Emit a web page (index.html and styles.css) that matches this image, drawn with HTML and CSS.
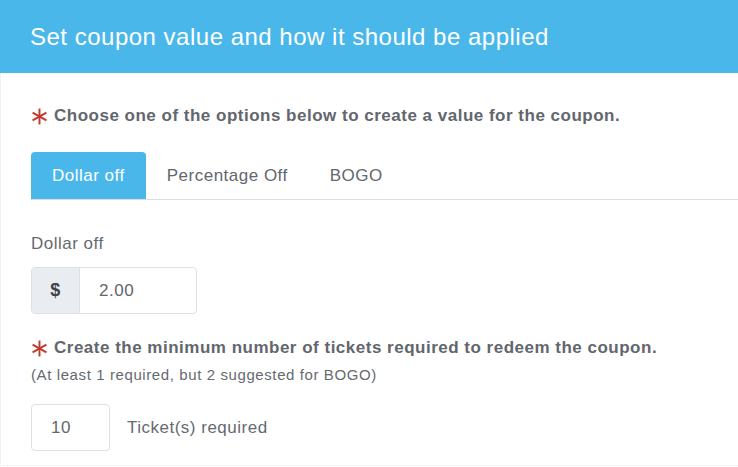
FILE: index.html
```html
<!DOCTYPE html>
<html lang="en">
<head>
<meta charset="utf-8">
<title>Set coupon value</title>
<link rel="stylesheet" href="styles.css">
</head>
<body>
<div class="panel">
  <div class="panel-header">Set coupon value and how it should be applied</div>
  <div class="panel-body">
    <div class="req-heading">
      <svg class="req-star" viewBox="0 0 16 16" aria-hidden="true">
        <g stroke="#c0392b" stroke-width="1.8" stroke-linecap="butt">
          <line x1="8" y1="0.5" x2="8" y2="15.5"/>
          <line x1="1.5" y1="4.3" x2="14.5" y2="11.7"/>
          <line x1="14.5" y1="4.3" x2="1.5" y2="11.7"/>
        </g>
      </svg>
      <span>Choose one of the options below to create a value for the coupon.</span>
    </div>
    <ul class="tabs">
      <li class="tab active">Dollar off</li>
      <li class="tab">Percentage Off</li>
      <li class="tab">BOGO</li>
    </ul>
    <div class="field-label">Dollar off</div>
    <div class="input-group">
      <span class="addon">$</span>
      <span class="input-value">2.00</span>
    </div>
    <div class="req-heading second">
      <svg class="req-star" viewBox="0 0 16 16" aria-hidden="true">
        <g stroke="#c0392b" stroke-width="1.8" stroke-linecap="butt">
          <line x1="8" y1="0.5" x2="8" y2="15.5"/>
          <line x1="1.5" y1="4.3" x2="14.5" y2="11.7"/>
          <line x1="14.5" y1="4.3" x2="1.5" y2="11.7"/>
        </g>
      </svg>
      <span>Create the minimum number of tickets required to redeem the coupon.</span>
    </div>
    <div class="hint">(At least 1 required, but 2 suggested for BOGO)</div>
    <div class="ticket-row">
      <span class="ticket-input">10</span>
      <span class="ticket-label">Ticket(s) required</span>
    </div>
    <div class="divider"></div>
  </div>
</div>
</body>
</html>
```
FILE: styles.css
```css
html, body {
  margin: 0;
  padding: 0;
  background: #ffffff;
}
body {
  font-family: "Liberation Sans", Arial, sans-serif;
  color: #666a70;
  letter-spacing: 0.5px;
}
.panel {
  width: 738px;
  height: 467px;
  overflow: hidden;
  box-sizing: border-box;
}
.panel-header {
  height: 73px;
  background: #4ab7eb;
  color: #ffffff;
  font-size: 24px;
  display: flex;
  align-items: center;
  padding-left: 30px;
}
.panel-body {
  padding: 32px 0 0 30px;
  border-left: 1px solid #f0f1f3;
}
.req-heading {
  display: flex;
  align-items: center;
  gap: 6px;
  font-size: 17px;
  font-weight: bold;
  line-height: 22px;
  color: #62666d;
}
.req-heading.second {
  margin-top: 23px;
}
.req-star {
  width: 17px;
  height: 17px;
  flex: none;
}
.tabs {
  list-style: none;
  margin: 25px 0 0 0;
  padding: 0;
  display: flex;
  border-bottom: 1px solid #dddddd;
}
.tab {
  height: 47px;
  padding: 0 21px;
  display: flex;
  align-items: center;
  font-size: 17px;
  color: #62666d;
  border-radius: 4px 4px 0 0;
}
.tab.active {
  background: #4ab7eb;
  color: #ffffff;
}
.field-label {
  margin-top: 33px;
  font-size: 17px;
  line-height: 22px;
}
.input-group {
  margin-top: 12px;
  display: flex;
  width: 166px;
  height: 47px;
  box-sizing: border-box;
  border: 1px solid #dde0e5;
  border-radius: 4px;
  overflow: hidden;
}
.addon {
  width: 47px;
  flex: none;
  background: #e9ecf0;
  border-right: 1px solid #dde0e5;
  display: flex;
  align-items: center;
  justify-content: center;
  font-weight: bold;
  font-size: 18px;
  color: #3e434a;
}
.input-value {
  display: flex;
  align-items: center;
  padding-left: 19px;
  font-size: 17px;
  color: #62666d;
}
.hint {
  margin-top: 6px;
  font-size: 15px;
  line-height: 20px;
  letter-spacing: 0.6px;
}
.ticket-row {
  margin-top: 19px;
  display: flex;
  align-items: center;
  gap: 17px;
}
.ticket-input {
  width: 79px;
  height: 47px;
  box-sizing: border-box;
  border: 1px solid #dde0e5;
  border-radius: 4px;
  display: flex;
  align-items: center;
  padding-left: 19px;
  font-size: 17px;
  color: #62666d;
}
.ticket-label {
  font-size: 17px;
}
.divider {
  margin: 14px 0 0 -28px;
  border-top: 1px dotted #e6e8eb;
}
```
